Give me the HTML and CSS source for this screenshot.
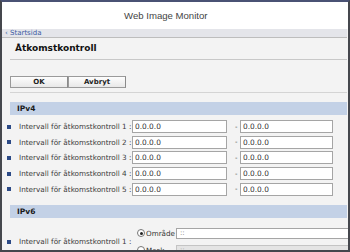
FILE: index.html
```html
<!DOCTYPE html>
<html>
<head>
<meta charset="utf-8">
<link rel="stylesheet" href="styles.css">
</head>
<body>
<div class="frame">
  <div class="header"><span class="app-title">Web Image Monitor</span></div>
  <div class="crumb"><a class="crumb-link" href="#">‹ Startsida</a></div>
  <div class="main">
    <div class="page-title">Åtkomstkontroll</div>
    <div class="buttons">
      <button class="btn">OK</button><button class="btn">Avbryt</button>
    </div>
    <div class="section-head">IPv4</div>
    <div class="rows">
      <div class="row"><span class="bullet"></span><span class="label">Intervall för åtkomstkontroll 1 :</span><input class="ip" value="0.0.0.0"><span class="dash">-</span><input class="ip" value="0.0.0.0"></div>
      <div class="row"><span class="bullet"></span><span class="label">Intervall för åtkomstkontroll 2 :</span><input class="ip" value="0.0.0.0"><span class="dash">-</span><input class="ip" value="0.0.0.0"></div>
      <div class="row"><span class="bullet"></span><span class="label">Intervall för åtkomstkontroll 3 :</span><input class="ip" value="0.0.0.0"><span class="dash">-</span><input class="ip" value="0.0.0.0"></div>
      <div class="row"><span class="bullet"></span><span class="label">Intervall för åtkomstkontroll 4 :</span><input class="ip" value="0.0.0.0"><span class="dash">-</span><input class="ip" value="0.0.0.0"></div>
      <div class="row"><span class="bullet"></span><span class="label">Intervall för åtkomstkontroll 5 :</span><input class="ip" value="0.0.0.0"><span class="dash">-</span><input class="ip" value="0.0.0.0"></div>
    </div>
    <div class="section-head v6">IPv6</div>
    <div class="v6row">
      <span class="bullet"></span><span class="label">Intervall för åtkomstkontroll 1 :</span>
      <div class="v6opts">
        <div class="opt"><span class="radio on"></span><span class="opt-label">Område</span><input class="ip6" value="::"></div>
        <div class="opt"><span class="radio"></span><span class="opt-label">Mask</span><input class="ip6 dis" value="::" disabled></div>
      </div>
    </div>
  </div>
</div>
</body>
</html>
```
FILE: styles.css
```css
html, body { margin: 0; padding: 0; }
body { width: 350px; height: 252px; overflow: hidden; background: #fff; }
.frame {
  width: 350px; height: 252px; box-sizing: border-box;
  border: 2px solid #45474d; border-top-color: #4a5274;
  overflow: hidden; display: flex; flex-direction: column;
  background: #f3f3f3;
}
.header {
  height: 26px; background: #fff; flex: none;
  display: flex; align-items: center; padding-left: 122px;
  border-bottom: 1px solid #fff;
}
.app-title { font-family: "Liberation Sans", Arial, sans-serif; font-size: 9.6px; color: #444; }
.crumb {
  height: 8px; background: #e4e5ea; flex: none; margin-right: 1px;
  border-bottom: 1px solid #bdbdbd; display: flex; align-items: center; padding-left: 3px;
}
.crumb-link { font-family: "DejaVu Sans", Verdana, sans-serif; font-size: 7px; color: #3b5ca3; text-decoration: none; line-height: 8px; }
.main { flex: 1; padding-left: 6px; padding-right: 1px; }
.page-title {
  font-family: "DejaVu Sans", Verdana, sans-serif; font-weight: bold; font-size: 9px; color: #111;
  height: 21px; line-height: 21px; padding-left: 5px; margin-left: 2px;
  border-bottom: 1px solid #c8c8c8;
}
.buttons {
  margin-left: 2px; padding-top: 16px; height: 16px;
  border-bottom: 1px solid #d4d4d4; margin-bottom: 9px; display: flex;
}
.btn {
  width: 58px; height: 12px; padding: 0; margin: 0;
  border: 1px solid #9a9a9a; border-right-color: #8a8a8a;
  background: linear-gradient(#fdfdfd, #e8e8e8);
  font-family: "DejaVu Sans", Verdana, sans-serif; font-weight: bold; font-size: 7px; color: #222;
  line-height: 10px; box-sizing: border-box;
}
.section-head {
  margin-left: 2px; height: 13px; background: #c3d1e6;
  font-family: "DejaVu Sans", Verdana, sans-serif; font-weight: bold; font-size: 7.5px; color: #1a1a1a;
  line-height: 13px; padding-left: 7px;
}
.rows { padding-top: 4px; padding-bottom: 8px; }
.row { height: 15.6px; display: flex; align-items: center; }
.bullet { width: 4px; height: 4px; background: #2c4a86; flex: none; margin-left: -1px; }
.label {
  font-family: "DejaVu Sans", Verdana, sans-serif; font-size: 7.25px; color: #3a3a3a;
  margin-left: 8px; width: 113px; white-space: nowrap; flex: none;
}
.ip {
  width: 95px; height: 13px; box-sizing: border-box; margin: 0; padding: 0 2px;
  border: 1px solid #a5a5a5; background: #fff; outline: none;
  font-family: "DejaVu Sans", Verdana, sans-serif; font-size: 7.4px; color: #333;
}
.dash {
  font-family: "DejaVu Sans", Verdana, sans-serif; font-size: 7px; color: #444;
  width: 13px; text-align: left; padding-left: 8px; box-sizing: border-box; flex: none;
}
.row .dash + .ip { width: 93px; }
.v6row { display: flex; align-items: center; padding-top: 7px; }
.v6opts { display: flex; flex-direction: column; margin-left: 5px; }
.opt { display: flex; align-items: center; height: 17px; }
.radio {
  width: 8px; height: 8px; box-sizing: border-box; border-radius: 50%;
  border: 1px solid #777; background: #fff; flex: none; position: relative;
}
.radio.on::after {
  content: ""; position: absolute; left: 1.5px; top: 1.5px; width: 3px; height: 3px;
  border-radius: 50%; background: #222;
}
.opt-label { font-family: "DejaVu Sans", Verdana, sans-serif; font-size: 7.2px; color: #333; margin-left: 1px; width: 30px; }
.ip6 {
  width: 180px; height: 11px; box-sizing: border-box; margin: 0; padding: 0 3px;
  border: 1px solid #a5a5a5; background: #fff; outline: none;
  font-family: "DejaVu Sans", Verdana, sans-serif; font-size: 7px; color: #666;
}
.ip6.dis { background: #e4e4e4; border-color: #c4c4c4; color: #999; }
```
